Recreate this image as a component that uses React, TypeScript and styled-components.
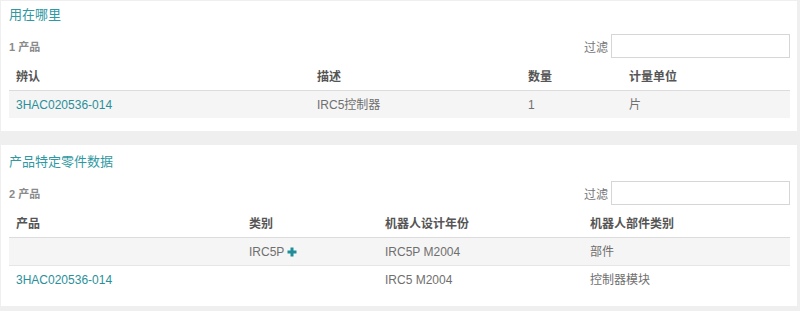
import React from 'react';
import styled, { createGlobalStyle } from 'styled-components';

const GlobalStyle = createGlobalStyle`
  html, body {
    margin: 0;
    padding: 0;
    background: #efefef;
    font-family: "Liberation Sans", Arial, "Noto Sans CJK SC", sans-serif;
  }
`;

const Page = styled.div`
  display: flex;
  flex-direction: column;
  gap: 14px;
  padding: 1px 3px 0 1px;
  width: 796px;
`;

const Panel = styled.section<{ $top: number }>`
  background: #ffffff;
  padding: ${({ $top }) => $top}px 7px 13px 8px;
`;

const Title = styled.h2`
  margin: 0;
  font-size: 13px;
  font-weight: normal;
  line-height: 18px;
  color: #2f98a2;
`;

const Toolbar = styled.div`
  display: flex;
  align-items: center;
  justify-content: space-between;
  margin-top: 10px;
  height: 24px;
`;

const Count = styled.span`
  font-size: 11px;
  font-weight: bold;
  color: #8a8a8a;
`;

const Filter = styled.label`
  display: flex;
  align-items: center;
  gap: 3px;
`;

const FilterLabel = styled.span`
  font-size: 12px;
  color: #777;
`;

const FilterInput = styled.input`
  box-sizing: border-box;
  width: 179px;
  height: 24px;
  border: 1px solid #d6d6d6;
  background: #fff;
  outline: none;
  margin: 0;
`;

const Table = styled.table`
  width: 781px;
  border-collapse: collapse;
  table-layout: fixed;
  font-size: 12px;
`;

const Th = styled.th`
  text-align: left;
  font-weight: bold;
  color: #555;
  padding: 12px 7px 6px;
  line-height: 14px;
  border-bottom: 1px solid #dcdcdc;
  height: 14px;
`;

const Tr = styled.tr<{ $striped: boolean }>`
  background: ${({ $striped }) => ($striped ? '#f5f5f5' : '#ffffff')};
  & + & {
    border-top: 1px solid #e6e6e6;
  }
`;

const Td = styled.td`
  padding: 0 7px;
  height: 27px;
  color: #6f6f6f;
  line-height: 14px;
`;

const Link = styled.a`
  color: #2a8f9a;
  text-decoration: none;
  cursor: pointer;
`;

const TypeCell = styled.span`
  display: inline-flex;
  align-items: center;
  gap: 3px;
`;

type Column = { key: string; title: string; width: number };
type Row = Record<string, React.ReactNode>;

const PlusIcon = () => (
  <svg width="10" height="10" viewBox="0 0 10 10">
    <path d="M5 0.5v9M0.5 5h9" stroke="#1f8e98" strokeWidth="3" />
  </svg>
);

const whereUsedColumns: Column[] = [
  { key: 'id', title: '辨认', width: 301 },
  { key: 'desc', title: '描述', width: 211 },
  { key: 'qty', title: '数量', width: 101 },
  { key: 'unit', title: '计量单位', width: 168 },
];

const specificColumns: Column[] = [
  { key: 'product', title: '产品', width: 233 },
  { key: 'type', title: '类别', width: 136 },
  { key: 'year', title: '机器人设计年份', width: 205 },
  { key: 'part', title: '机器人部件类别', width: 207 },
];

const Section = ({
  title,
  count,
  columns,
  rows,
  top,
}: {
  title: string;
  count: number;
  columns: Column[];
  rows: Row[];
  top: number;
}) => (
  <Panel $top={top}>
    <Title>{title}</Title>
    <Toolbar>
      <Count>{count} 产品</Count>
      <Filter>
        <FilterLabel>过滤</FilterLabel>
        <FilterInput />
      </Filter>
    </Toolbar>
    <Table>
      <colgroup>
        {columns.map((c) => (
          <col key={c.key} style={{ width: c.width }} />
        ))}
      </colgroup>
      <thead>
        <tr>
          {columns.map((c) => (
            <Th key={c.key}>{c.title}</Th>
          ))}
        </tr>
      </thead>
      <tbody>
        {rows.map((r, i) => (
          <Tr key={i} $striped={i % 2 === 0}>
            {columns.map((c) => (
              <Td key={c.key}>{r[c.key]}</Td>
            ))}
          </Tr>
        ))}
      </tbody>
    </Table>
  </Panel>
);

const App = () => {
  const whereUsedRows: Row[] = [
    { id: <Link>3HAC020536-014</Link>, desc: 'IRC5控制器', qty: '1', unit: '片' },
  ];

  const specificRows: Row[] = [
    {
      product: '',
      type: (
        <TypeCell>
          IRC5P <PlusIcon />
        </TypeCell>
      ),
      year: 'IRC5P M2004',
      part: '部件',
    },
    { product: <Link>3HAC020536-014</Link>, type: '', year: 'IRC5 M2004', part: '控制器模块' },
  ];

  return (
    <Page>
      <GlobalStyle />
      <Section title="用在哪里" count={1} columns={whereUsedColumns} rows={whereUsedRows} top={5} />
      <Section title="产品特定零件数据" count={2} columns={specificColumns} rows={specificRows} top={8} />
    </Page>
  );
};

export default App;
